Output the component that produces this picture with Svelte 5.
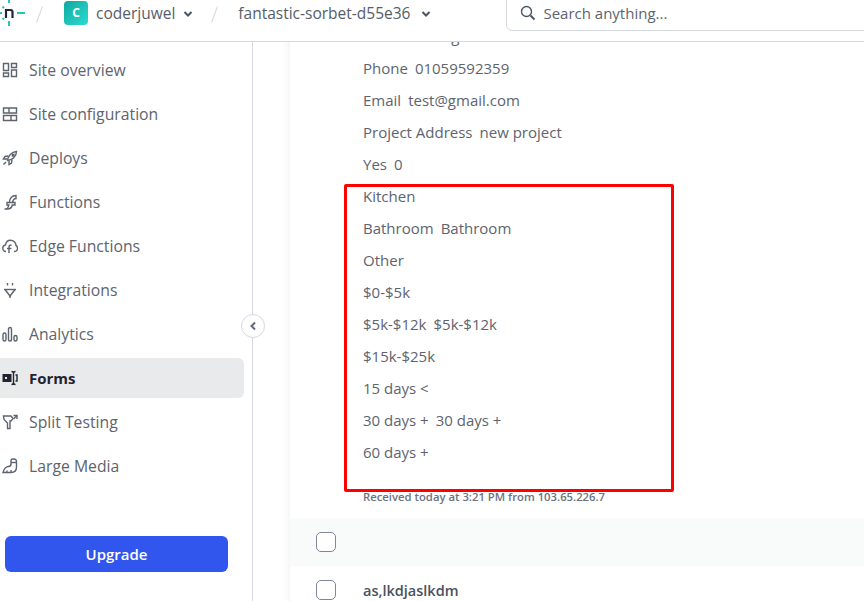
<script>
	const nav = [
		{ label: 'Site overview', d: ['M1.5 1.5h5v7h-5z', 'M9.5 1.5h5v4h-5z', 'M1.5 11h5v3.5h-5z', 'M9.5 8h5v6.5h-5z'] },
		{ label: 'Site configuration', d: ['M1.5 2h13v5h-13z', 'M7 2v5', 'M1.5 9.5h13v5h-13z', 'M9 9.5v5'] },
		{ label: 'Deploys', d: ['M5.5 10.500C6 6 9.500 2 14.500 1.500 14.500 6.500 10 10 5.500 10.500z', 'M6.500 6L3 6.500 1.500 9h4', 'M10 9.500L9.500 13 7 14.500v-4', 'M4 12L1.500 14.500', 'M10.500 4.500h1.500v1.500h-1.500z'] },
		{ label: 'Functions', d: ['M2.500 15c3 0 3.700-1 4.300-4H5V8.500h2.300C7.800 4 9.500 1.500 14 1.500v3c-2 0-3 .8-3.400 4H13V11h-2.700c-.6 3-1.800 4-4.800 4z', 'M7.300 8.500H11'] },
		{ label: 'Edge Functions', d: ['M4 13.500C2 13.500.8 12 .8 10.300.8 8.500 2 7.300 3.500 7 4 4 6 2.200 8.500 2.200c3.200 0 5.500 2.500 5.500 5.300 1 .5 1.500 1.500 1.500 2.700 0 1.800-1.300 3.300-3.500 3.300', 'M7 15V9c0-1.500.8-2 2.500-2', 'M5 10.500h4.500'] },
		{ label: 'Integrations', d: ['M2 7.500h12', 'M3 7.500L8 14l5-6.500', 'M8 14v2', 'M5.500 1v2.500', 'M10.500 1v2.500'] },
		{ label: 'Analytics', d: ['M1 8.500a1.500 1.500 0 0 1 3 0v5a1.500 1.500 0 0 1-3 0z', 'M6.500 3a1.500 1.500 0 0 1 3 0v10.500a1.500 1.500 0 0 1-3 0z', 'M12 11a1.500 1.500 0 0 1 3 0v2.500a1.500 1.500 0 0 1-3 0z'] },
		{ label: 'Forms', active: true, d: ['M11.500 2v12', 'M9.500 1.500c1 0 2 .3 2 1.500 0-1.200 1-1.500 2-1.500', 'M9.500 14.500c1 0 2-.3 2-1.500 0 1.200 1 1.500 2 1.500', 'M13.500 5h1.500v6h-1.500'], fill: 'M.5 4h9v8h-9zM3 7v2h2v-2z' },
		{ label: 'Split Testing', d: ['M1.500 2h7.500l2 2.500-2 2.500h-1v7.500h-2.500v-5.500L2 5.500z', 'M11.500 1.500h3.500v3.500', 'M15 1.500l-3.500 3.500'] },
		{ label: 'Large Media', d: ['M1 14.500h8c3.500 0 5.500-2 5.500-5.500V3.500c0-1.500-1-2.500-2.500-2.500h-1.500c-1 0-1.500 1-1.500 2v3C9 8 8 8.500 6.500 8.500 4 8.500 2 11 1 14.500z', 'M5 14.500v-2', 'M9 14.500v-2.500', 'M9 4.500h5.500'] }
	];

	const lines = [
		['Name', 'testing'],
		['Phone', '01059592359'],
		['Email', 'test@gmail.com'],
		['Project Address', 'new project'],
		['Yes', '0'],
		['Kitchen', ''],
		['Bathroom', 'Bathroom'],
		['Other', ''],
		['$0-$5k', ''],
		['$5k-$12k', '$5k-$12k'],
		['$15k-$25k', ''],
		['15 days <', ''],
		['30 days +', '30 days +'],
		['60 days +', '']
	];
</script>

<div class="page">
	<header>
		<svg class="logo" width="30" height="26" viewBox="0 0 30 26">
			<g stroke="#27c4c0" stroke-width="2" fill="none">
				<path d="M9 0v3M9 21v5M17 13h8" />
				<path d="M2.500 6.500l1.500 1.500M2.500 19.500l1.500-1.500M0 13h2" />
			</g>
			<path d="M6 18V10h4.500a2 2 0 0 1 2 2v6" stroke="#1f2933" stroke-width="2.200" fill="none" />
		</svg>
		<span class="slash first"></span>
		<span class="avatar">C</span>
		<span class="crumb">coderjuwel</span>
		<svg class="chev" width="10" height="8" viewBox="0 0 10 8"><path d="M1.500 2L5 5.500 8.500 2" /></svg>
		<span class="slash second"></span>
		<span class="crumb site">fantastic-sorbet-d55e36</span>
		<svg class="chev" width="10" height="8" viewBox="0 0 10 8"><path d="M1.500 2L5 5.500 8.500 2" /></svg>
		<div class="search">
			<svg width="16" height="16" viewBox="0 0 16 16" fill="none" stroke="#4b5563" stroke-width="1.400">
				<circle cx="6.500" cy="6.500" r="5" />
				<path d="M10.500 10.500L14.500 14.500" stroke-width="2" />
			</svg>
			<span>Search anything...</span>
		</div>
	</header>

	<div class="body">
		<aside>
			<nav>
				{#each nav as item}
					<div class="item" class:active={item.active}>
						<svg width="16" height="16" viewBox="0 0 16 16" fill="none" stroke="currentColor" stroke-width="1.400">
							{#each item.d as d}<path {d} />{/each}
							{#if item.fill}<path d={item.fill} fill="currentColor" fill-rule="evenodd" stroke="none" />{/if}
						</svg>
						<span>{item.label}</span>
					</div>
				{/each}
			</nav>
			<button class="upgrade">Upgrade</button>
		</aside>

		<main>
			<div class="card">
				<div class="entry">
					{#each lines as [label, value]}
						<p>{label}{#if value}<span>{value}</span>{/if}</p>
					{/each}
					<small>Received today at 3:21 PM from 103.65.226.7</small>
				</div>
				<div class="row blank"><span class="check"></span></div>
				<div class="row">
					<span class="check"></span>
					<strong>as,lkdjaslkdm</strong>
				</div>
			</div>
		</main>

		<button class="collapse" aria-label="Collapse sidebar">
			<svg width="8" height="10" viewBox="0 0 8 10" fill="none" stroke="#5f6b7a" stroke-width="2"><path d="M6 1.500L2.500 5 6 8.500" /></svg>
		</button>
	</div>

	<div class="highlight"></div>
</div>

<style>
	:global(body) {
		margin: 0;
		background: #fff;
		font-family: "Open Sans", "Noto Sans", sans-serif;
		color: #5d646e;
	}
	.page {
		position: relative;
		width: 864px;
		height: 601px;
		overflow: hidden;
		display: flex;
		flex-direction: column;
	}
	header {
		flex: none;
		height: 41px;
		border-bottom: 1px solid #d5d8dc;
		display: flex;
		align-items: flex-start;
		overflow: hidden;
	}
	header > * { flex: none; }
	.logo { display: block; }
	.slash {
		width: 1px;
		height: 17px;
		margin-top: 6px;
		background: #d5d8dc;
		transform: rotate(20deg);
	}
	.slash.first { margin-left: 9px; margin-right: 24px; }
	.slash.second { margin-left: 21px; margin-right: 23px; }
	.avatar {
		width: 24px;
		height: 24px;
		margin-top: 1px;
		border-radius: 4px;
		background: linear-gradient(135deg, #0ea89e, #2edbd2);
		color: #fff;
		font-size: 12px;
		font-weight: 700;
		line-height: 24px;
		text-align: center;
	}
	.crumb {
		margin-left: 8px;
		font-size: 15.500px;
		font-weight: 500;
		line-height: 26px;
		color: #565d68;
	}
	.crumb.site { margin-left: 0; margin-right: 3px; }
	.chev {
		margin: 10px 0 0 8px;
		fill: none;
		stroke: #4b5563;
		stroke-width: 2;
	}
	.search {
		width: 400px;
		height: 37px;
		margin: -6px 0 0 75px;
		padding-left: 13px;
		box-sizing: border-box;
		display: flex;
		align-items: center;
		gap: 7px;
		border: 1px solid #d5d8dc;
		border-radius: 6px;
		font-size: 15px;
		color: #5d646e;
	}
	.search svg { flex: none; }
	.body {
		position: relative;
		flex: 1;
		min-height: 0;
		display: flex;
	}
	aside {
		flex: none;
		width: 252px;
		border-right: 1px solid #d5d8dc;
		padding-top: 8px;
	}
	nav {
		display: flex;
		flex-direction: column;
		gap: 4px;
		margin-right: 8px;
	}
	.item {
		height: 40px;
		display: flex;
		align-items: center;
		gap: 11px;
		padding-left: 2px;
		border-radius: 0 6px 6px 0;
		font-size: 15.750px;
		font-weight: 500;
	}
	.item svg { flex: none; }
	.item.active {
		background: #e9eaec;
		color: #1f2430;
		font-size: 15px;
		font-weight: 700;
	}
	.upgrade {
		display: block;
		width: 223px;
		height: 36px;
		margin: 50px 0 0 5px;
		border: none;
		border-radius: 6px;
		background: #3056ee;
		color: #fff;
		font: 600 15px "Open Sans", sans-serif;
	}
	main {
		flex: 1;
		min-width: 0;
		overflow: hidden;
		padding-left: 37px;
	}
	.card {
		margin-top: -18px;
		background: #fff;
		box-shadow: 0 0 10px rgba(0, 0, 0, 0.07);
		min-height: 640px;
	}
	.entry {
		padding: 0 0 13px 73px;
	}
	p {
		margin: 0 0 8px;
		font-size: 15px;
		line-height: 24px;
	}
	p span { margin-left: 7px; }
	small {
		display: block;
		margin-top: 25px;
		font-size: 11.300px;
		font-weight: 600;
		line-height: 16px;
		color: #6b7280;
	}
	.row {
		display: flex;
		align-items: center;
		gap: 27px;
		height: 48px;
		padding-left: 26px;
	}
	.row.blank { background: #f9fafa; }
	.check {
		flex: none;
		width: 20px;
		height: 20px;
		box-sizing: border-box;
		border: 1px solid #7e8794;
		border-radius: 5px;
		background: #fff;
	}
	.row strong {
		font-size: 14.500px;
		font-weight: 600;
		color: #4b5260;
	}
	.collapse {
		position: absolute;
		left: 241px;
		top: 272px;
		width: 24px;
		height: 24px;
		padding: 0;
		display: flex;
		align-items: center;
		justify-content: center;
		border: 1px solid #d5d8dc;
		border-radius: 50%;
		background: #fff;
	}
	.highlight {
		position: absolute;
		left: 344px;
		top: 184px;
		width: 330px;
		height: 308px;
		box-sizing: border-box;
		border: 3px solid #ff0000;
		border-radius: 2px;
	}
</style>
